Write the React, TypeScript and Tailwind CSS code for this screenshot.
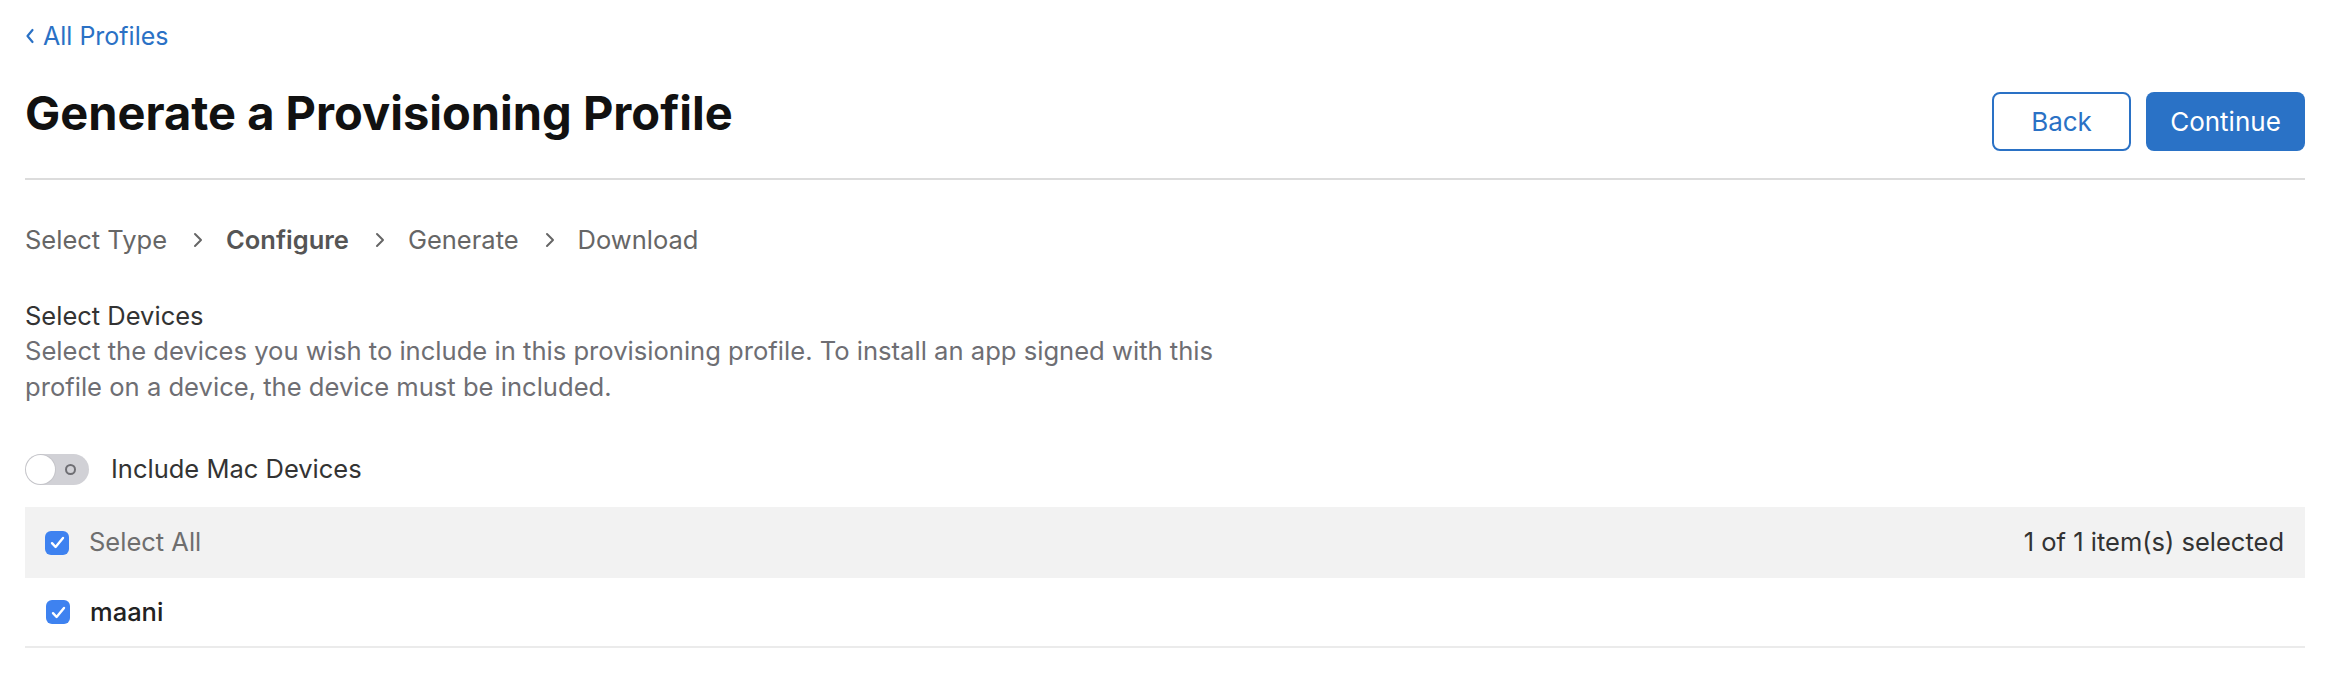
import { useState } from "react";

type Device = {
  id: number;
  name: string;
  checked: boolean;
};

const steps = ["Select Type", "Configure", "Generate", "Download"];

function Checkbox({ checked }: { checked: boolean }) {
  return (
    <span
      className={`w-6 h-6 rounded-[6px] flex items-center justify-center shrink-0 ${
        checked ? "bg-[#3e82f0]" : "bg-white border-2 border-[#c7c7cc]"
      }`}
    >
      {checked && (
        <svg width="15" height="13" viewBox="0 0 15 13" fill="none">
          <path
            d="M2 7.2L5.6 11L13 2"
            stroke="white"
            strokeWidth="2.4"
            strokeLinecap="round"
            strokeLinejoin="round"
          />
        </svg>
      )}
    </span>
  );
}

function Chevron() {
  return (
    <svg width="10" height="18" viewBox="0 0 10 18" fill="none" className="ml-[26px] mr-[23px]">
      <path
        d="M2 3L8 9L2 15"
        stroke="#666"
        strokeWidth="2"
        strokeLinecap="round"
        strokeLinejoin="round"
      />
    </svg>
  );
}

function App() {
  const [includeMac, setIncludeMac] = useState(false);
  const [devices] = useState<Device[]>([{ id: 1, name: "maani", checked: true }]);

  const selectedCount = devices.filter((device) => device.checked).length;

  return (
    <div className="min-h-screen bg-white pl-[25px] pr-[41px] font-['Inter','Liberation_Sans',sans-serif]">
      <div className="pt-[21px]">
        <a className="flex items-center gap-[8px] text-[25px] leading-[30px] text-[#2a71c5] w-fit">
          <svg width="10" height="18" viewBox="0 0 10 18" fill="none">
            <path
              d="M7.5 3L2.5 9L7.5 15"
              stroke="#2a71c5"
              strokeWidth="2.2"
              strokeLinecap="round"
              strokeLinejoin="round"
            />
          </svg>
          All Profiles
        </a>
      </div>

      <div className="flex justify-between items-start mt-[32px] pb-[27px] border-b-2 border-[#dcdcdc]">
        <h1 className="text-[47px] leading-[56px] font-bold text-[#111] pt-[2px]">
          Generate a Provisioning Profile
        </h1>
        <div className="flex gap-[15px] mt-[9px]">
          <button className="w-[139px] h-[59px] rounded-[8px] border-2 border-[#2a71c5] text-[#2a71c5] text-[26px]">
            Back
          </button>
          <button className="w-[159px] h-[59px] rounded-[8px] bg-[#2a72c6] text-white text-[26px]">
            Continue
          </button>
        </div>
      </div>

      <nav className="flex items-center mt-[42px] text-[25.5px] leading-[36px] text-[#666]">
        {steps.map((step, index) => (
          <div key={step} className="flex items-center">
            {index > 0 && <Chevron />}
            <span className={step === "Configure" ? "font-semibold text-[#555]" : ""}>
              {step}
            </span>
          </div>
        ))}
      </nav>

      <section className="mt-[41px]">
        <h3 className="text-[25.5px] leading-[34px] text-[#333]">Select Devices</h3>
        <p className="text-[25.6px] leading-[36px] text-[#6e6e73] max-w-[1240px]">
          Select the devices you wish to include in this provisioning profile. To install an app
          signed with this profile on a device, the device must be included.
        </p>
      </section>

      <div className="flex items-center gap-[22px] mt-[48px]">
        <button
          onClick={() => setIncludeMac(!includeMac)}
          className={`relative w-[64px] h-[31px] rounded-full ${
            includeMac ? "bg-[#3e82f0]" : "bg-[#d1d1d6]"
          }`}
        >
          <span
            className={`absolute top-[1px] w-[29px] h-[29px] rounded-full bg-white shadow-[0_0_0_1px_rgba(0,0,0,0.06)] ${
              includeMac ? "left-[34px]" : "left-[1px]"
            }`}
          />
          {!includeMac && (
            <span className="absolute right-[13px] top-[10px] w-[11px] h-[11px] rounded-full border-2 border-[#6e6e73]" />
          )}
        </button>
        <span className="text-[25.5px] leading-[32px] text-[#333]">Include Mac Devices</span>
      </div>

      <div className="mt-[22px]">
        <div className="flex items-center justify-between h-[71px] bg-[#f2f2f2] pl-[20px] pr-[21px]">
          <div className="flex items-center gap-[20px]">
            <Checkbox checked={selectedCount === devices.length} />
            <span className="text-[25.5px] text-[#6e6e6e]">Select All</span>
          </div>
          <span className="text-[25.5px] text-[#333]">
            {selectedCount} of {devices.length} item(s) selected
          </span>
        </div>
        {devices.map((device) => (
          <div
            key={device.id}
            className="flex items-center gap-[20px] h-[70px] pl-[21px] border-b-2 border-[#ebebeb]"
          >
            <Checkbox checked={device.checked} />
            <span className="text-[25.5px] font-medium text-[#222]">{device.name}</span>
          </div>
        ))}
      </div>
    </div>
  );
}

export default App;
